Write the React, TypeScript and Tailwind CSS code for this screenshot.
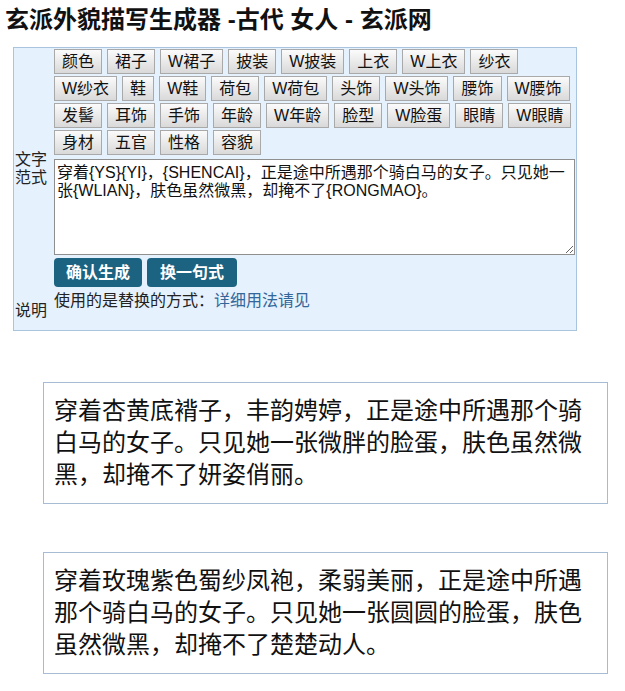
import React from "react";

const TAGS: string[] = [
  "颜色", "裙子", "W裙子", "披装", "W披装", "上衣", "W上衣", "纱衣",
  "W纱衣", "鞋", "W鞋", "荷包", "W荷包", "头饰", "W头饰", "腰饰", "W腰饰",
  "发髻", "耳饰", "手饰", "年龄", "W年龄", "脸型", "W脸蛋", "眼睛", "W眼睛",
  "身材", "五官", "性格", "容貌",
];

const TEMPLATE =
  "穿着{YS}{YI}，{SHENCAI}，正是途中所遇那个骑白马的女子。只见她一张{WLIAN}，肤色虽然微黑，却掩不了{RONGMAO}。";

const RESULTS: string[] = [
  "穿着杏黄底褙子，丰韵娉婷，正是途中所遇那个骑白马的女子。只见她一张微胖的脸蛋，肤色虽然微黑，却掩不了妍姿俏丽。",
  "穿着玫瑰紫色蜀纱凤袍，柔弱美丽，正是途中所遇那个骑白马的女子。只见她一张圆圆的脸蛋，肤色虽然微黑，却掩不了楚楚动人。",
];

const font = "font-['Liberation_Sans','Noto_Sans_CJK_SC',sans-serif]";

const TagButton = ({ label }: { label: string }) => (
  <button className="h-[25px] px-[7px] border border-[#a9a9a9] bg-linear-to-b from-[#fbfbfb] to-[#d9d9d9] text-[16px] leading-[18px] text-[#111]">
    {label}
  </button>
);

export default function App() {
  return (
    <div className={`${font} bg-white text-[#111] min-h-[691px]`}>
      {/* Title */}
      <h1 className="pl-[5px] pt-[6px] text-[24px] leading-[28px] font-bold">
        玄派外貌描写生成器 -古代 女人 - 玄派网
      </h1>

      {/* Generator panel */}
      <div className="ml-[13px] mt-[13px] w-[564px] border border-[#a9c4de] bg-[#e5f1fd] pt-[1px] pb-[9px]">
        <div className="flex">
          <div className="w-[40px] shrink-0" />
          <div className="flex flex-wrap gap-x-[5px] gap-y-[2px] w-[521px]">
            {TAGS.map((t) => (
              <TagButton key={t} label={t} />
            ))}
          </div>
        </div>

        <div className="flex mt-[4px]">
          <div className="w-[40px] shrink-0 -mt-[8px] pl-[1px] text-[16px] leading-[18px] text-[#222]">
            文字
            <br />
            范式
          </div>
          <textarea
            className="w-[521px] h-[96px] border border-[#8f8f8f] bg-white px-[2px] pt-[4px] pb-[2px] text-[16px] leading-[18px] text-[#111] outline-none"
            defaultValue={TEMPLATE}
          />
        </div>

        <div className="flex">
          <div className="w-[40px] shrink-0 pt-[46px] pl-[1px] text-[16px] leading-[20px] text-[#222]">
            说明
          </div>
          <div className="pt-[3px]">
            <div className="flex gap-[5px]">
              <button className="h-[29px] px-[12px] rounded-[4px] bg-[#1b6381] text-white text-[16px] font-bold">
                确认生成
              </button>
              <button className="h-[29px] px-[13px] rounded-[4px] bg-[#1b6381] text-white text-[16px] font-bold">
                换一句式
              </button>
            </div>
            <p className="mt-[4px] text-[16px] leading-[20px] text-[#222]">
              使用的是替换的方式：<a className="text-[#336699]">详细用法请见</a>
            </p>
          </div>
        </div>
      </div>

      {/* Results */}
      <div className="flex flex-col gap-[48px] mt-[51px] ml-[43px]">
        {RESULTS.map((r, i) => (
          <div
            key={i}
            className="w-[565px] border border-[#a8bbd4] px-[10px] py-[12px] text-[24px] leading-[32px] text-[#111]"
          >
            {r}
          </div>
        ))}
      </div>
    </div>
  );
}
